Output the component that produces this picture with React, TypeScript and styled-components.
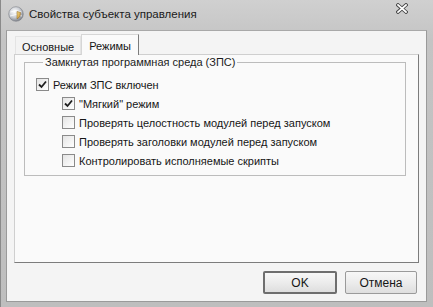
import React, { useState } from 'react';
import styled, { createGlobalStyle } from 'styled-components';

const GlobalStyle = createGlobalStyle`
  html, body {
    margin: 0;
    padding: 0;
    background: #bdbdbd;
  }
  body {
    font-family: "Liberation Sans", Arial, sans-serif;
    font-size: 11px;
    color: #161616;
  }
`;

const Window = styled.div`
  width: 433px;
  height: 307px;
  box-sizing: border-box;
  display: flex;
  flex-direction: column;
  background: linear-gradient(#d0d0d0, #c4c4c4 40px, #bebebe);
  border-left: 1px solid #8a8a8a;
`;

const TitleBar = styled.div`
  height: 30px;
  flex: none;
  display: flex;
  align-items: center;
  padding: 0 25px 2px 7px;
  box-sizing: border-box;
`;

const Title = styled.span`
  margin-left: 5px;
  font-size: 11.5px;
  color: #1a1a1a;
  flex: 1;
`;

const CloseGlyph = styled.svg`
  align-self: flex-start;
  margin-top: 3px;
`;

const Client = styled.div`
  flex: 1;
  margin: 0 6px 6px 5px;
  background: #f4f4f4;
  border: 1px solid #9a9a9a;
  border-top-color: #a8a8a8;
  display: flex;
  flex-direction: column;
  padding: 2px 7px 7px 7px;
`;

const TabStrip = styled.div`
  height: 21px;
  display: flex;
  align-items: flex-end;
  padding-left: 1px;
`;

const Tab = styled.div<{ $active?: boolean }>`
  height: ${p => (p.$active ? 21 : 18)}px;
  box-sizing: border-box;
  padding: ${p => (p.$active ? '1px 7px 0 7px' : '2px 6px 0 6px')};
  display: flex;
  align-items: center;
  border: 1px solid ${p => (p.$active ? '#d6d6d6' : '#e4e4e4')};
  border-right-color: ${p => (p.$active ? '#7c7c7c' : '#e4e4e4')};
  border-bottom: none;
  background: ${p => (p.$active ? '#fafafa' : '#f3f3f3')};
  margin-bottom: ${p => (p.$active ? '-1px' : '0')};
  position: relative;
  z-index: ${p => (p.$active ? 1 : 0)};
  cursor: default;
`;

const Panel = styled.div`
  height: 209px;
  box-sizing: border-box;
  background: #fafafa;
  border: 1px solid #cfcfcf;
  border-right-color: #7c7c7c;
  border-bottom-color: #7c7c7c;
  padding: 0 12px 0 9px;
`;

const Group = styled.fieldset`
  margin: 0;
  height: 121px;
  box-sizing: border-box;
  border: 1px solid #bcbcbc;
  padding: 5px 0 0 11px;
`;

const Legend = styled.legend`
  padding: 0 2px;
  margin-left: 7px;
  line-height: 15px;
  color: #1c1c1c;
`;

const Row = styled.label<{ $indent?: boolean }>`
  height: 19px;
  display: flex;
  align-items: center;
  padding-left: ${p => (p.$indent ? 26 : 0)}px;
  cursor: default;
`;

const Box = styled.span`
  width: 13px;
  height: 13px;
  box-sizing: border-box;
  border: 1px solid #8a8a8a;
  background: linear-gradient(135deg, #e4e4e4, #ffffff);
  margin-right: 4px;
  display: flex;
  align-items: center;
  justify-content: center;
  flex: none;
`;

const Footer = styled.div`
  display: flex;
  justify-content: flex-end;
  gap: 8px;
  margin-top: 8px;
  padding-right: 2px;
`;

const Button = styled.button<{ $default?: boolean }>`
  width: ${p => (p.$default ? 74 : 72)}px;
  height: 23px;
  box-sizing: border-box;
  font-family: "Liberation Sans", Arial, sans-serif;
  font-size: 12px;
  color: #161616;
  border-radius: 2px;
  border: ${p => (p.$default ? '2px solid #6e6e6e' : '1px solid #9a9a9a')};
  background: linear-gradient(#f7f7f7, #ececec 50%, #dedede);
  padding: 0;
`;

const Check = ({ on }: { on: boolean }) => (
  <Box>
    {on && (
      <svg width="9" height="9" viewBox="0 0 9 9">
        <path d="M1 4.5 L3.5 7 L8 1.5" fill="none" stroke="#1e1e1e" strokeWidth="1.8" />
      </svg>
    )}
  </Box>
);

const AppIcon = () => (
  <svg width="16" height="16" viewBox="0 0 16 16">
    <defs>
      <radialGradient id="ball" cx="0.4" cy="0.35" r="0.7">
        <stop offset="0" stopColor="#ffffff" />
        <stop offset="0.55" stopColor="#c9ccd2" />
        <stop offset="1" stopColor="#737780" />
      </radialGradient>
      <linearGradient id="shield" x1="0" y1="0" x2="1" y2="1">
        <stop offset="0" stopColor="#f6dc8c" />
        <stop offset="1" stopColor="#c08a2a" />
      </linearGradient>
    </defs>
    <circle cx="8" cy="8" r="7.3" fill="url(#ball)" stroke="#80838a" strokeWidth="0.6" />
    <path d="M2.5 6 Q8 3 13.5 6 M2 10 Q8 7 14 10" stroke="#ffffff" strokeWidth="0.9" fill="none" opacity="0.85" />
    <path d="M9 5.5 L12.5 6.4 L12.2 9.6 Q11.4 11.8 9 12.8 Z" fill="url(#shield)" stroke="#936418" strokeWidth="0.5" />
  </svg>
);

const rows = [
  { text: '"Мягкий" режим', on: true },
  { text: 'Проверять целостность модулей перед запуском', on: false },
  { text: 'Проверять заголовки модулей перед запуском', on: false },
  { text: 'Контролировать исполняемые скрипты', on: false },
];

const App: React.FC = () => {
  const [tab, setTab] = useState(1);

  return (
    <>
      <GlobalStyle />
      <Window>
        <TitleBar>
          <AppIcon />
          <Title>Свойства субъекта управления</Title>
          <CloseGlyph width="12" height="11" viewBox="0 0 12 11">
            <path d="M2 2 L10 9 M10 2 L2 9" stroke="#474747" strokeWidth="3.6" strokeLinecap="square" />
            <path d="M2 2 L10 9 M10 2 L2 9" stroke="#ffffff" strokeWidth="1.7" strokeLinecap="square" />
          </CloseGlyph>
        </TitleBar>
        <Client>
          <TabStrip>
            <Tab $active={tab === 0} onClick={() => setTab(0)}>Основные</Tab>
            <Tab $active={tab === 1} onClick={() => setTab(1)}>Режимы</Tab>
          </TabStrip>
          <Panel>
            <Group>
              <Legend>Замкнутая программная среда (ЗПС)</Legend>
              <Row>
                <Check on />
                Режим ЗПС включен
              </Row>
              {rows.map(r => (
                <Row $indent key={r.text}>
                  <Check on={r.on} />
                  {r.text}
                </Row>
              ))}
            </Group>
          </Panel>
          <Footer>
            <Button $default>OK</Button>
            <Button>Отмена</Button>
          </Footer>
        </Client>
      </Window>
    </>
  );
};

export default App;
